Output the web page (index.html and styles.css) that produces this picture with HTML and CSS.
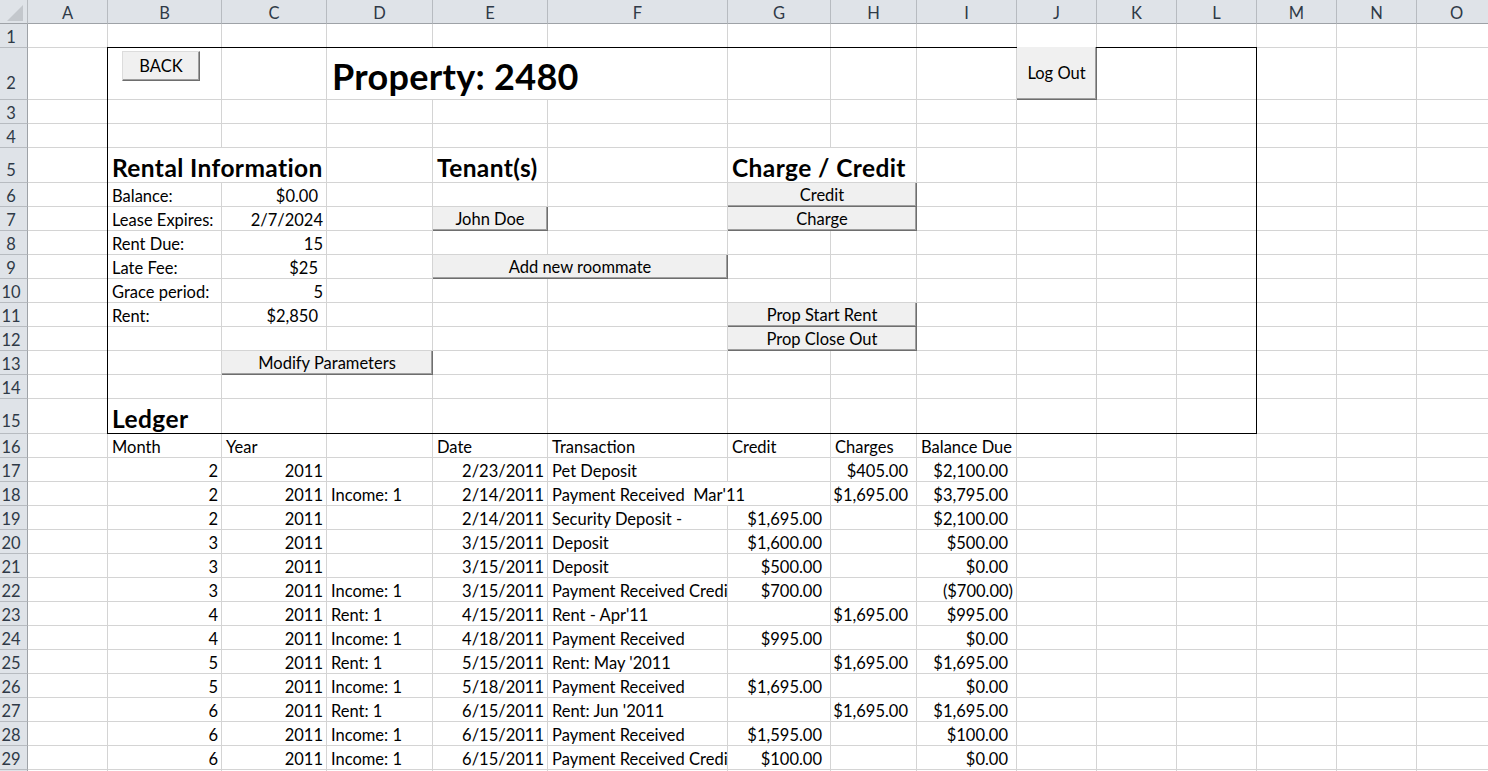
FILE: index.html
```html
<!DOCTYPE html>
<html lang="en">
<head>
<meta charset="utf-8">
<title>Property 2480</title>
<link rel="stylesheet" href="styles.css">
</head>
<body>
<div class="sheet">
  <div class="hd corner"><svg width="27" height="23" viewBox="0 0 27 23"><polygon points="23,5 23,21 7,21" fill="#c3c7cc"/></svg></div>
  <div class="hd">A</div><div class="hd">B</div><div class="hd">C</div><div class="hd">D</div><div class="hd">E</div><div class="hd">F</div><div class="hd">G</div><div class="hd">H</div><div class="hd">I</div><div class="hd">J</div><div class="hd">K</div><div class="hd">L</div><div class="hd">M</div><div class="hd">N</div><div class="hd">O</div>

  <div class="rh">1</div><div></div><div></div><div></div><div></div><div></div><div></div><div></div><div></div><div></div><div></div><div></div><div></div><div></div><div></div><div></div>

  <div class="rh t52">2</div><div></div>
  <div class="back-cell"><button class="btn back">BACK</button></div>
  <div></div>
  <div class="s3 title">Property: 2480</div>
  <div></div><div></div><div></div>
  <div class="bc"><button class="btn logout">Log Out</button></div>
  <div></div><div></div><div></div><div></div><div></div>

  <div class="rh">3</div><div></div><div></div><div></div><div></div><div></div><div></div><div></div><div></div><div></div><div></div><div></div><div></div><div></div><div></div><div></div>
  <div class="rh">4</div><div></div><div></div><div></div><div></div><div></div><div></div><div></div><div></div><div></div><div></div><div></div><div></div><div></div><div></div><div></div>

  <div class="rh t35">5</div><div></div>
  <div class="s2 sec">Rental Information</div>
  <div></div>
  <div class="sec">Tenant(s)</div>
  <div></div>
  <div class="s2 sec">Charge / Credit</div>
  <div></div><div></div><div></div><div></div><div></div><div></div><div></div>

  <div class="rh">6</div><div></div>
  <div>Balance:</div><div class="m">$0.00</div>
  <div></div><div></div><div></div>
  <div class="s2 bc"><button class="btn">Credit</button></div>
  <div></div><div></div><div></div><div></div><div></div><div></div><div></div>

  <div class="rh">7</div><div></div>
  <div>Lease Expires:</div><div class="n">2/7/2024</div>
  <div></div>
  <div class="bc"><button class="btn">John Doe</button></div>
  <div></div>
  <div class="s2 bc"><button class="btn">Charge</button></div>
  <div></div><div></div><div></div><div></div><div></div><div></div><div></div>

  <div class="rh">8</div><div></div>
  <div>Rent Due:</div><div class="n">15</div>
  <div></div><div></div><div></div><div></div><div></div>
  <div></div><div></div><div></div><div></div><div></div><div></div><div></div>

  <div class="rh">9</div><div></div>
  <div>Late Fee:</div><div class="m">$25</div>
  <div></div>
  <div class="s2 bc"><button class="btn">Add new roommate</button></div>
  <div></div><div></div>
  <div></div><div></div><div></div><div></div><div></div><div></div><div></div>

  <div class="rh">10</div><div></div>
  <div>Grace period:</div><div class="n">5</div>
  <div></div><div></div><div></div><div></div><div></div>
  <div></div><div></div><div></div><div></div><div></div><div></div><div></div>

  <div class="rh">11</div><div></div>
  <div>Rent:</div><div class="m">$2,850</div>
  <div></div><div></div><div></div>
  <div class="s2 bc"><button class="btn">Prop Start Rent</button></div>
  <div></div><div></div><div></div><div></div><div></div><div></div><div></div>

  <div class="rh">12</div><div></div>
  <div></div><div></div>
  <div></div><div></div><div></div>
  <div class="s2 bc"><button class="btn">Prop Close Out</button></div>
  <div></div><div></div><div></div><div></div><div></div><div></div><div></div>

  <div class="rh">13</div><div></div>
  <div></div>
  <div class="s2 bc"><button class="btn">Modify Parameters</button></div>
  <div></div><div></div><div></div><div></div>
  <div></div><div></div><div></div><div></div><div></div><div></div><div></div>

  <div class="rh">14</div><div></div><div></div><div></div><div></div><div></div><div></div><div></div><div></div><div></div><div></div><div></div><div></div><div></div><div></div><div></div>

  <div class="rh t35">15</div><div></div>
  <div class="sec">Ledger</div>
  <div></div><div></div><div></div><div></div><div></div><div></div><div></div><div></div><div></div><div></div><div></div><div></div><div></div>

  <div class="rh">16</div><div></div>
  <div>Month</div><div>Year</div><div></div><div>Date</div><div>Transaction</div><div>Credit</div><div>Charges</div><div>Balance Due</div>
  <div></div><div></div><div></div><div></div><div></div><div></div>

  <div class="rh">17</div><div></div>
  <div class="n">2</div><div class="n">2011</div><div></div><div class="n">2/23/2011</div><div>Pet Deposit</div><div></div><div class="m">$405.00</div><div class="m">$2,100.00</div>
  <div></div><div></div><div></div><div></div><div></div><div></div>

  <div class="rh">18</div><div></div>
  <div class="n">2</div><div class="n">2011</div><div>Income: 1</div><div class="n">2/14/2011</div><div class="s2">Payment Received  Mar'11</div><div class="m">$1,695.00</div><div class="m">$3,795.00</div>
  <div></div><div></div><div></div><div></div><div></div><div></div>

  <div class="rh">19</div><div></div>
  <div class="n">2</div><div class="n">2011</div><div></div><div class="n">2/14/2011</div><div>Security Deposit -</div><div class="m">$1,695.00</div><div></div><div class="m">$2,100.00</div>
  <div></div><div></div><div></div><div></div><div></div><div></div>

  <div class="rh">20</div><div></div>
  <div class="n">3</div><div class="n">2011</div><div></div><div class="n">3/15/2011</div><div>Deposit</div><div class="m">$1,600.00</div><div></div><div class="m">$500.00</div>
  <div></div><div></div><div></div><div></div><div></div><div></div>

  <div class="rh">21</div><div></div>
  <div class="n">3</div><div class="n">2011</div><div></div><div class="n">3/15/2011</div><div>Deposit</div><div class="m">$500.00</div><div></div><div class="m">$0.00</div>
  <div></div><div></div><div></div><div></div><div></div><div></div>

  <div class="rh">22</div><div></div>
  <div class="n">3</div><div class="n">2011</div><div>Income: 1</div><div class="n">3/15/2011</div><div>Payment Received Credi</div><div class="m">$700.00</div><div></div><div class="n">($700.00)</div>
  <div></div><div></div><div></div><div></div><div></div><div></div>

  <div class="rh">23</div><div></div>
  <div class="n">4</div><div class="n">2011</div><div>Rent: 1</div><div class="n">4/15/2011</div><div>Rent - Apr'11</div><div></div><div class="m">$1,695.00</div><div class="m">$995.00</div>
  <div></div><div></div><div></div><div></div><div></div><div></div>

  <div class="rh">24</div><div></div>
  <div class="n">4</div><div class="n">2011</div><div>Income: 1</div><div class="n">4/18/2011</div><div>Payment Received</div><div class="m">$995.00</div><div></div><div class="m">$0.00</div>
  <div></div><div></div><div></div><div></div><div></div><div></div>

  <div class="rh">25</div><div></div>
  <div class="n">5</div><div class="n">2011</div><div>Rent: 1</div><div class="n">5/15/2011</div><div>Rent: May '2011</div><div></div><div class="m">$1,695.00</div><div class="m">$1,695.00</div>
  <div></div><div></div><div></div><div></div><div></div><div></div>

  <div class="rh">26</div><div></div>
  <div class="n">5</div><div class="n">2011</div><div>Income: 1</div><div class="n">5/18/2011</div><div>Payment Received</div><div class="m">$1,695.00</div><div></div><div class="m">$0.00</div>
  <div></div><div></div><div></div><div></div><div></div><div></div>

  <div class="rh">27</div><div></div>
  <div class="n">6</div><div class="n">2011</div><div>Rent: 1</div><div class="n">6/15/2011</div><div>Rent: Jun '2011</div><div></div><div class="m">$1,695.00</div><div class="m">$1,695.00</div>
  <div></div><div></div><div></div><div></div><div></div><div></div>

  <div class="rh">28</div><div></div>
  <div class="n">6</div><div class="n">2011</div><div>Income: 1</div><div class="n">6/15/2011</div><div>Payment Received</div><div class="m">$1,595.00</div><div></div><div class="m">$100.00</div>
  <div></div><div></div><div></div><div></div><div></div><div></div>

  <div class="rh">29</div><div></div>
  <div class="n">6</div><div class="n">2011</div><div>Income: 1</div><div class="n">6/15/2011</div><div>Payment Received Credi</div><div class="m">$100.00</div><div></div><div class="m">$0.00</div>
  <div></div><div></div><div></div><div></div><div></div><div></div>

  <div class="rh"></div><div></div><div></div><div></div><div></div><div></div><div></div><div></div><div></div><div></div><div></div><div></div><div></div><div></div><div></div><div></div>

  <span class="frame"></span>
</div>
</body>
</html>
```

FILE: styles.css
```css
* {
  box-sizing: border-box;
  margin: 0;
  padding: 0;
}

html,
body {
  width: 1488px;
  height: 771px;
  overflow: hidden;
  background: #ffffff;
}

body {
  font-family: Lato, "Liberation Sans", sans-serif;
  font-size: 16.5px;
  color: #000000;
}

.sheet {
  position: relative;
  display: grid;
  width: 1497px;
  grid-template-columns: 28px 80px 114px 105px 106px 115px 180px 103px 86px 100px repeat(6, 80px);
  grid-template-rows: 24px 24px 52px 24px 24px 35px repeat(9, 24px) 35px repeat(15, 24px);
}

.sheet > div {
  display: flex;
  align-items: flex-end;
  min-width: 0;
  overflow: hidden;
  white-space: pre;
  line-height: 1.16;
  padding: 0 3px 0 4px;
  border-right: 1px solid #d4d4d4;
  border-bottom: 1px solid #d4d4d4;
}

.sheet > .s2 { grid-column: span 2; }
.sheet > .s3 { grid-column: span 3; }

.sheet > .n { justify-content: flex-end; }
.sheet > .m { justify-content: flex-end; padding-right: 8px; }

/* headers */
.sheet > .hd {
  justify-content: center;
  padding: 0;
  background: #dfe3e8;
  color: #2f3a47;
  border-right-color: #b7bbc0;
  border-bottom-color: #9ea2a7;
}

.sheet > .corner {
  padding: 0;
  align-items: stretch;
}

.sheet > .rh {
  justify-content: center;
  padding: 0 5px 0 0;
  background: #dfe3e8;
  color: #2f3a47;
  border-right-color: #9ea2a7;
  border-bottom-color: #b7bbc0;
}

.sheet > .rh.t35 { padding-bottom: 2px; }
.sheet > .rh.t52 { padding-bottom: 6px; }

/* titles */
.sheet > .title {
  font-size: 36px;
  font-weight: 700;
  letter-spacing: 0.3px;
  line-height: 1.2;
  padding-left: 5px;
  padding-bottom: 1px;
}

.sheet > .sec {
  font-size: 24.5px;
  font-weight: 700;
  letter-spacing: 0.4px;
  line-height: 1.2;
  padding-left: 4px;
  padding-bottom: 0;
}

/* buttons */
.sheet > .bc {
  padding: 0;
  align-items: stretch;
  overflow: visible;
  border-right-color: #6e6e6e;
  border-bottom-color: #6e6e6e;
}

.btn {
  position: relative;
  z-index: 1;
  flex: 1;
  display: flex;
  align-items: center;
  justify-content: center;
  padding-top: 2px;
  font: inherit;
  color: #000000;
  background: #f0f0f0;
  border: none;
  box-shadow: inset -1px -1px 0 #a0a0a0;
  white-space: nowrap;
}

.sheet > .back-cell {
  align-items: flex-start;
  padding: 3px 0 0 14px;
}

.btn.back {
  flex: none;
  width: 78px;
  height: 30px;
  border-top: 1px solid #dcdcdc;
  border-left: 1px solid #dcdcdc;
  border-right: 1px solid #6e6e6e;
  border-bottom: 1px solid #6e6e6e;
}

.btn.logout {
  margin-top: -1px;
}

/* outline box around B2:L15 */
.frame {
  position: absolute;
  grid-column: 3 / 14;
  grid-row: 3 / 17;
  top: -1px;
  left: -1px;
  right: 0;
  bottom: 0;
  border: 1px solid #000000;
  pointer-events: none;
}
```
